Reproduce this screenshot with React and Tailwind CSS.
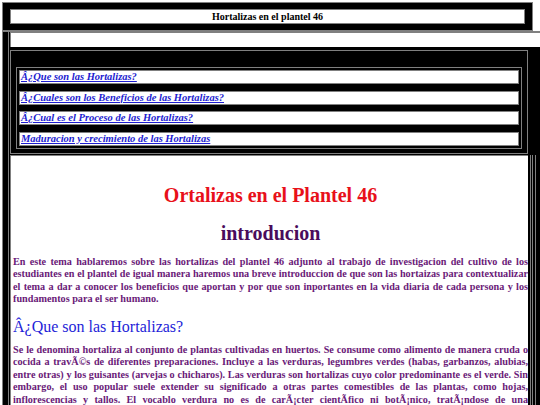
export default function App() {
  const links = [
    'Â¿Que son las Hortalizas?',
    'Â¿Cuales son los Beneficios de las Hortalizas?',
    'Â¿Cual es el Proceso de las Hortalizas?',
    'Maduracion y crecimiento de las Hortalizas',
  ];

  return (
    <div className="w-[540px] h-[405px] overflow-hidden bg-white font-['Liberation_Serif','Times_New_Roman',serif]">
      {/* Cabecera */}
      <div className="ml-[2px] mt-[2px] w-[531px] bg-black border border-[#808080] px-[7px] py-[6px]">
        <div className="h-[15px] bg-white border border-[#808080] text-center text-[10px] font-bold leading-[13px] text-black">
          Hortalizas en el plantel 46
        </div>
      </div>

      {/* Marco principal */}
      <div className="ml-[2px] w-[540px] bg-black border-l border-t border-[#808080] pl-[5px] h-[380px]">
        <div className="h-full border-l border-[#808080] pl-[1px]">
          <div className="h-[15px] bg-white border-l border-t border-[#808080]"></div>

          <div className="w-[518px] mt-[3px] border border-[#808080] bg-black pt-[16px] px-[5px] pb-[4px]">
            <div className="border border-[#808080] p-[2px] flex flex-col gap-[6.6px]">
              {links.map((l) => (
                <div key={l} className="h-[14px] bg-white border border-[#808080] pl-[1px] text-[10.5px] leading-[12px] font-bold italic">
                  <a href="#" className="text-[#1c1cd0] underline">{l}</a>
                </div>
              ))}
            </div>
          </div>

          <div className="flex mt-[1px]">
            <div className="w-[518px] h-[260px] bg-white border-l border-t border-[#808080] pl-[2px] text-justify">
              <h1 className="mt-[27px] text-center text-[20px] leading-[24px] font-bold text-[#e8101a]">Ortalizas en el Plantel 46</h1>
              <h2 className="mt-[14px] text-center text-[20px] leading-[24px] font-bold text-[#4a0c5c]">introducion</h2>
              <p className="mt-[11px] text-[10.2px] leading-[12.5px] font-bold text-[#6a1a78]">
                En este tema hablaremos sobre las hortalizas del plantel 46 adjunto al trabajo de investigacion del cultivo de los estudiantes en el plantel de igual manera haremos una breve introduccion de que son las hortaizas para contextualizar el tema a dar a conocer los beneficios que aportan y por que son inportantes en la vida diaria de cada persona y los fundamentos para el ser humano.
              </p>
              <h3 className="mt-[11px] text-[16px] leading-[20px] text-[#1e1ed8]">Â¿Que son las Hortalizas?</h3>
              <p className="mt-[7px] text-[10.2px] leading-[12.5px] font-bold text-[#6a1a78]">
                Se le denomina hortaliza al conjunto de plantas cultivadas en huertos. Se consume como alimento de manera cruda o cocida a travÃ©s de diferentes preparaciones. Incluye a las verduras, legumbres verdes (habas, garbanzos, alubias, entre otras) y los guisantes (arvejas o chicharos). Las verduras son hortalizas cuyo color predominante es el verde. Sin embargo, el uso popular suele extender su significado a otras partes comestibles de las plantas, como hojas, inflorescencias y tallos. El vocablo verdura no es de carÃ¡cter cientÃfico ni botÃ¡nico, tratÃ¡ndose de una denominaciÃ³n popular.
              </p>
            </div>
            <div className="w-[12px] h-[260px] flex">
              <div className="w-[3px] ml-[2px] border-l border-r border-[#808080]"></div>
              <div className="w-[3px] ml-[2px] border-l border-[#808080]"></div>
            </div>
          </div>
        </div>
      </div>
    </div>
  );
}
